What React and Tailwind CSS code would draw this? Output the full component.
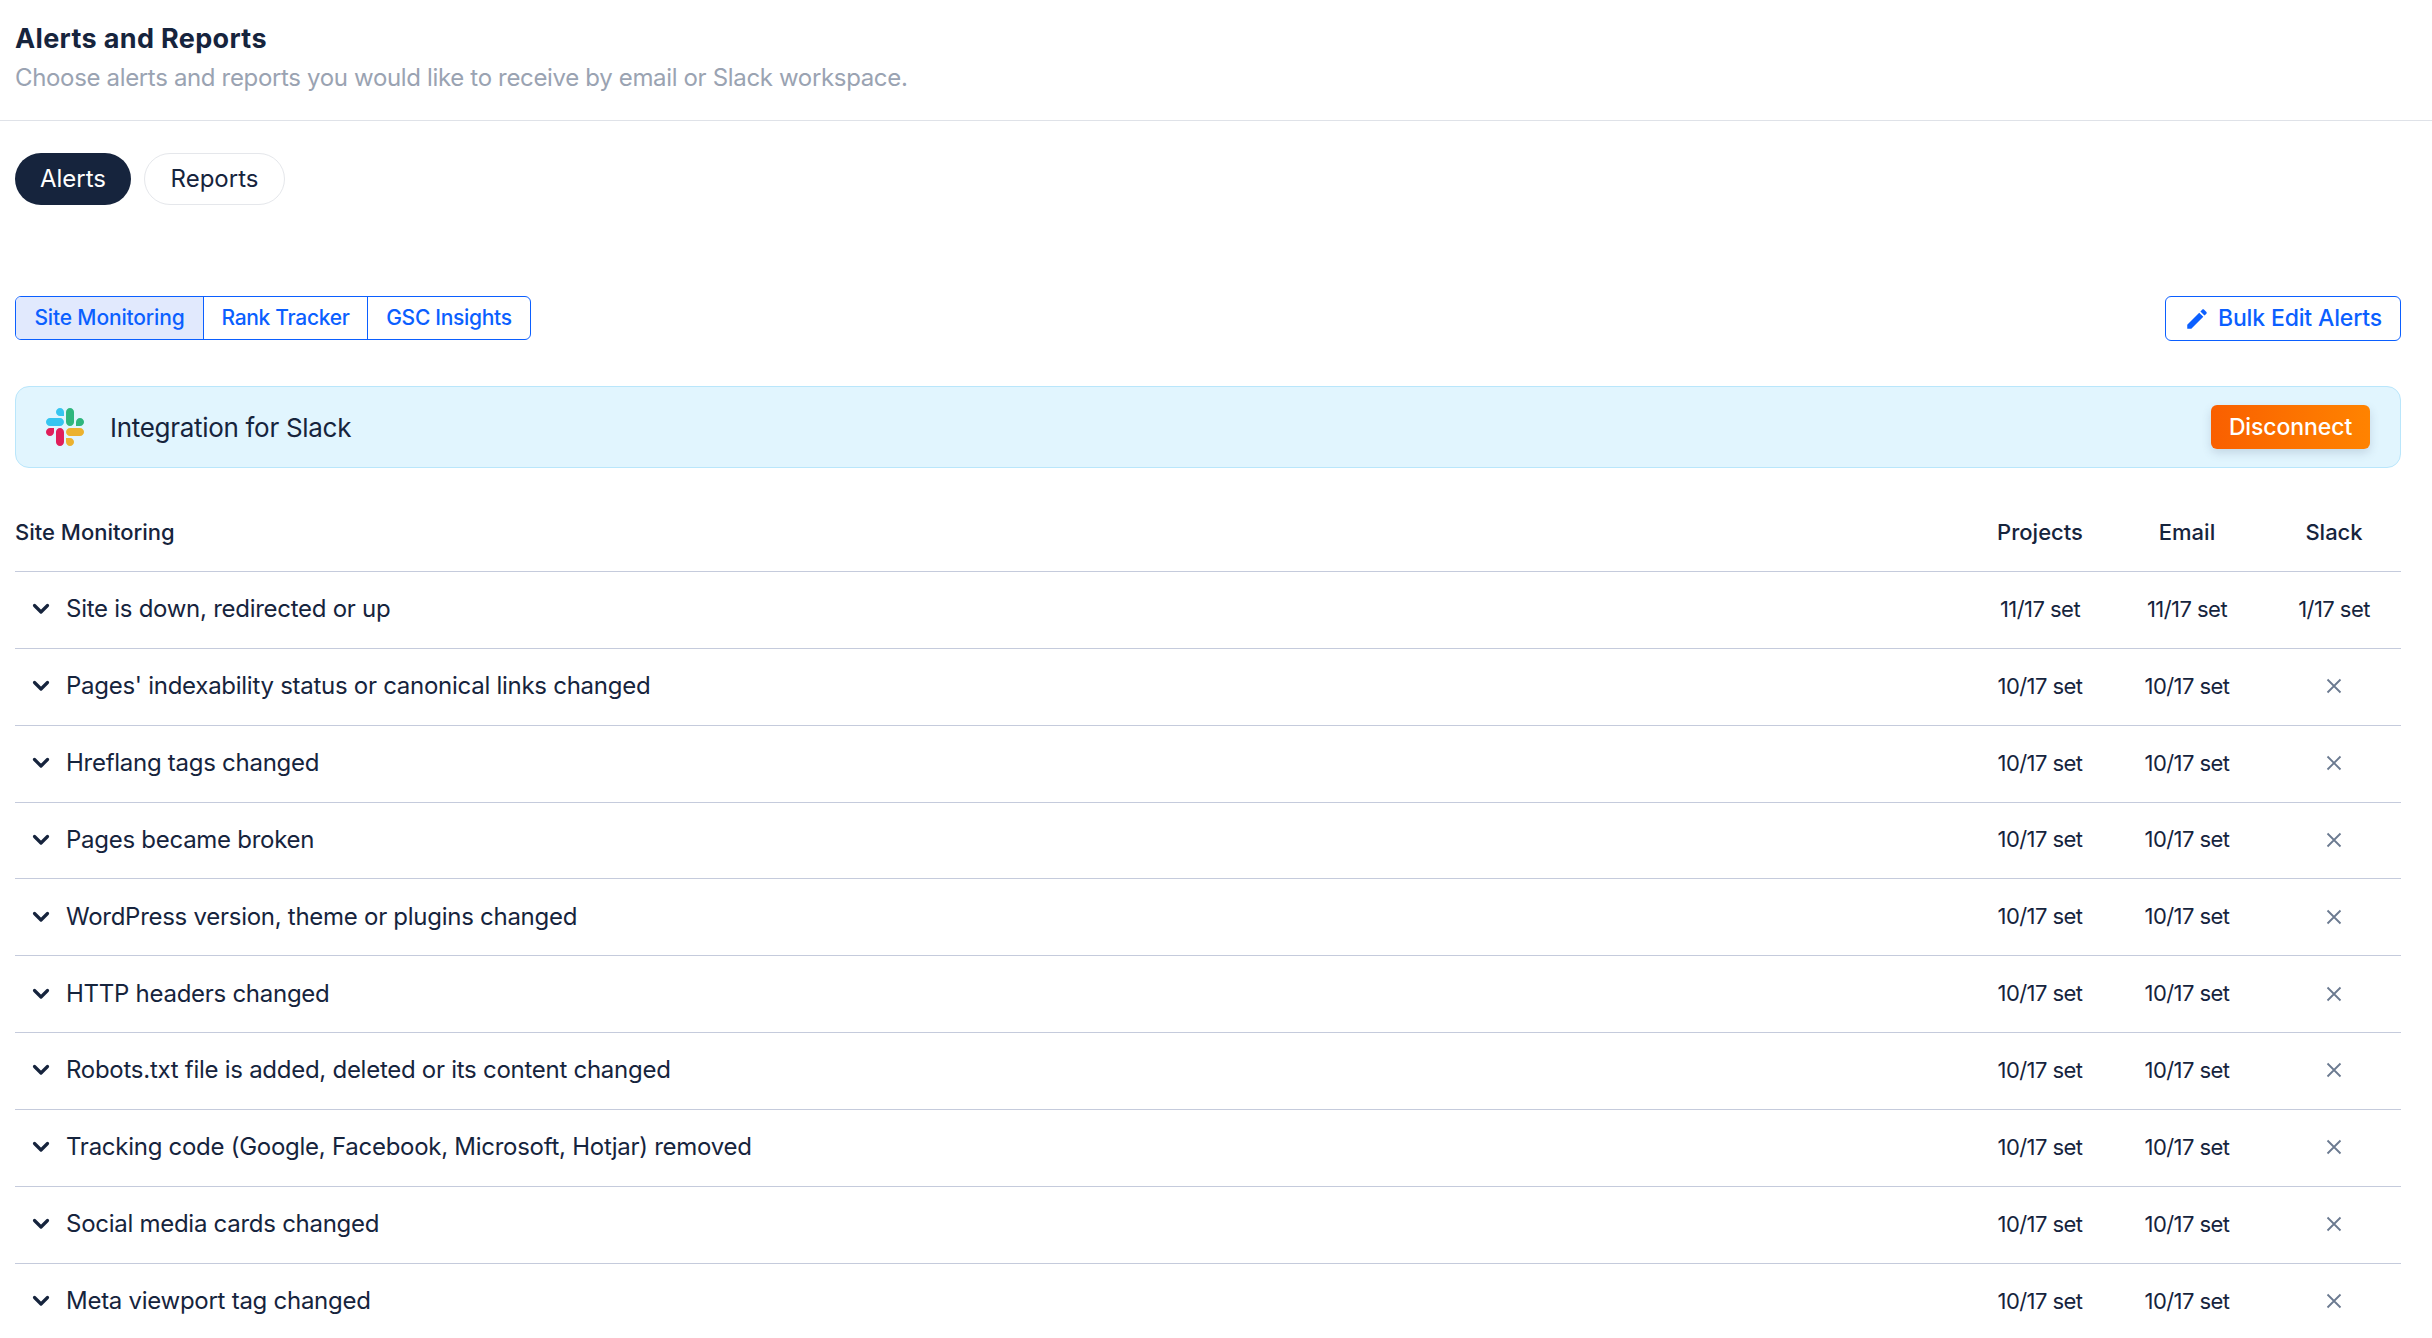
import React from 'react';

const rows = [
  { name: 'Site is down, redirected or up', projects: '11/17 set', email: '11/17 set', slack: '1/17 set' },
  { name: "Pages' indexability status or canonical links changed", projects: '10/17 set', email: '10/17 set' },
  { name: 'Hreflang tags changed', projects: '10/17 set', email: '10/17 set' },
  { name: 'Pages became broken', projects: '10/17 set', email: '10/17 set' },
  { name: 'WordPress version, theme or plugins changed', projects: '10/17 set', email: '10/17 set' },
  { name: 'HTTP headers changed', projects: '10/17 set', email: '10/17 set' },
  { name: 'Robots.txt file is added, deleted or its content changed', projects: '10/17 set', email: '10/17 set' },
  { name: 'Tracking code (Google, Facebook, Microsoft, Hotjar) removed', projects: '10/17 set', email: '10/17 set' },
  { name: 'Social media cards changed', projects: '10/17 set', email: '10/17 set' },
  { name: 'Meta viewport tag changed', projects: '10/17 set', email: '10/17 set' },
];

function SlackLogo() {
  return (
    <svg viewBox="0 0 122.8 122.8" className="w-[38px] h-[38px] shrink-0">
      <path d="M25.8 77.6c0 7.1-5.8 12.9-12.9 12.9S0 84.7 0 77.6s5.8-12.9 12.9-12.9h12.9v12.9z" fill="#E01E5A" />
      <path d="M32.3 77.6c0-7.1 5.8-12.9 12.9-12.9s12.9 5.8 12.9 12.9v32.3c0 7.1-5.8 12.9-12.9 12.9s-12.9-5.8-12.9-12.9V77.6z" fill="#E01E5A" />
      <path d="M45.2 25.8c-7.1 0-12.9-5.8-12.9-12.9S38.1 0 45.2 0s12.9 5.8 12.9 12.9v12.9H45.2z" fill="#36C5F0" />
      <path d="M45.2 32.3c7.1 0 12.9 5.8 12.9 12.9s-5.8 12.9-12.9 12.9H12.9C5.8 58.1 0 52.3 0 45.2s5.8-12.9 12.9-12.9h32.3z" fill="#36C5F0" />
      <path d="M97 45.2c0-7.1 5.8-12.9 12.9-12.9s12.9 5.8 12.9 12.9-5.8 12.9-12.9 12.9H97V45.2z" fill="#2EB67D" />
      <path d="M90.5 45.2c0 7.1-5.8 12.9-12.9 12.9s-12.9-5.8-12.9-12.9V12.9C64.7 5.8 70.5 0 77.6 0s12.9 5.8 12.9 12.9v32.3z" fill="#2EB67D" />
      <path d="M77.6 97c7.1 0 12.9 5.8 12.9 12.9s-5.8 12.9-12.9 12.9-12.9-5.8-12.9-12.9V97h12.9z" fill="#ECB22E" />
      <path d="M77.6 90.5c-7.1 0-12.9-5.8-12.9-12.9s5.8-12.9 12.9-12.9h32.3c7.1 0 12.9 5.8 12.9 12.9s-5.8 12.9-12.9 12.9H77.6z" fill="#ECB22E" />
    </svg>
  );
}

function Chevron() {
  return (
    <svg viewBox="0 0 20 20" className="w-[20px] h-[20px] shrink-0" fill="none" stroke="#16243d" strokeWidth="3.2" strokeLinecap="round" strokeLinejoin="round">
      <path d="M3.5 6.5 10 13l6.5-6.5" />
    </svg>
  );
}

function Cross() {
  return (
    <svg viewBox="0 0 16 16" className="w-[16px] h-[16px]" fill="none" stroke="#6b7a90" strokeWidth="1.8">
      <path d="M1.5 1.5l13 13M14.5 1.5l-13 13" />
    </svg>
  );
}

export default function App() {
  return (
    <div className="h-[1338px] overflow-hidden bg-white text-[#16243d] font-['Inter','Liberation_Sans',sans-serif]">
      <div className="h-[121px] border-b border-[#dfe2e8] px-[15px] pt-[23px]">
        <h1 className="text-[27px] leading-[32px] font-bold tracking-[0.35px]">Alerts and Reports</h1>
        <p className="mt-[7px] text-[24px] leading-[32px] text-[#9aa3b2] tracking-[-0.34px]">
          Choose alerts and reports you would like to receive by email or Slack workspace.
        </p>
      </div>

      <div className="pl-[15px] pr-[31px]">
        <div className="flex gap-[13px] pt-[32px]">
          <button className="h-[52px] w-[116px] rounded-full bg-[#16243d] text-white text-[24px]">Alerts</button>
          <button className="h-[52px] w-[141px] rounded-full border border-[#e5e7eb] text-[24px]">Reports</button>
        </div>

        <div className="mt-[91px] flex items-start justify-between">
          <div className="flex h-[44px] rounded-[6px] border-[1.5px] border-[#0b5fff] text-[#0b5fff] text-[21px] font-medium overflow-hidden">
            <div className="w-[188px] flex items-center justify-center bg-[#e1e9fd] border-r-[1.5px] border-[#0b5fff] tracking-[-0.15px]">Site Monitoring</div>
            <div className="w-[164px] flex items-center justify-center border-r-[1.5px] border-[#0b5fff] tracking-[-0.3px]">Rank Tracker</div>
            <div className="w-[162px] flex items-center justify-center tracking-[-0.3px]">GSC Insights</div>
          </div>
          <button className="h-[45px] w-[236px] rounded-[6px] border-[1.5px] border-[#0b5fff] text-[#0b5fff] text-[23px] font-medium tracking-[-0.15px] flex items-center justify-center gap-[8px]">
            <svg viewBox="0 0 24 24" className="w-[26px] h-[26px]" fill="currentColor">
              <path d="M3 17.25V21h3.75L17.81 9.94l-3.75-3.75L3 17.25zM20.71 7.04c.39-.39.39-1.02 0-1.41l-2.34-2.34c-.39-.39-1.02-.39-1.41 0l-1.83 1.83 3.75 3.75 1.83-1.83z" />
            </svg>
            Bulk Edit Alerts
          </button>
        </div>

        <div className="mt-[45px] h-[82px] rounded-[14px] border border-[#b9e6fb] bg-[#e1f5fe] flex items-center justify-between pl-[30px] pr-[30px]">
          <div className="flex items-center gap-[26px]">
            <SlackLogo />
            <span className="text-[26px] tracking-[-0.3px]">Integration for Slack</span>
          </div>
          <button className="h-[44px] w-[159px] rounded-[6px] bg-gradient-to-r from-[#f95f00] to-[#ff8300] text-white text-[23px] font-medium tracking-[-0.1px] shadow-[0_4px_10px_rgba(60,80,110,0.18)]">
            Disconnect
          </button>
        </div>

        <div className="h-[104px] flex items-center justify-between border-b-[1.5px] border-[#c5cbdc] pt-[26px] text-[22px] font-medium">
          <div>Site Monitoring</div>
          <div className="flex text-center">
            <div className="w-[134px]">Projects</div>
            <div className="w-[160px]">Email</div>
            <div className="w-[134px]">Slack</div>
          </div>
        </div>

        {rows.map(row => (
          <div key={row.name} className="h-[76.85px] pb-[1px] flex items-center justify-between border-b-[1.5px] border-[#c5cbdc] text-[24px]">
            <div className="flex items-center gap-[15px] pl-[16px]">
              <Chevron />
              <span className="tracking-[-0.27px]">{row.name}</span>
            </div>
            <div className="flex text-center text-[22px] tracking-[-0.55px]">
              <div className="w-[134px]">{row.projects}</div>
              <div className="w-[160px]">{row.email}</div>
              <div className="w-[134px] flex items-center justify-center">
                {row.slack ? row.slack : <Cross />}
              </div>
            </div>
          </div>
        ))}
      </div>
    </div>
  );
}
